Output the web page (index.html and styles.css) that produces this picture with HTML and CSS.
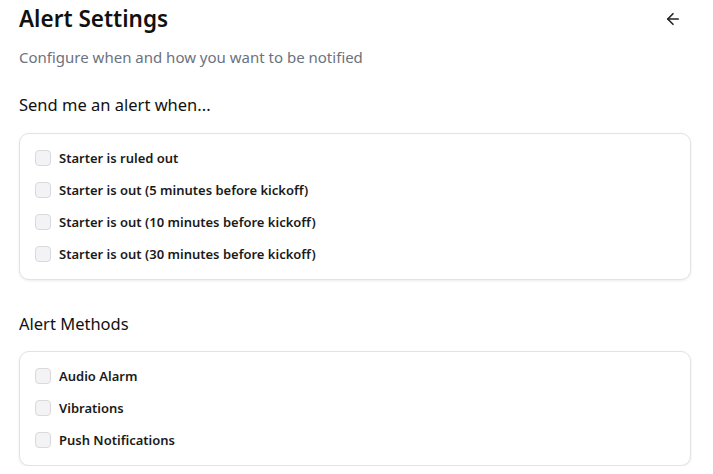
FILE: index.html
```html
<!DOCTYPE html>
<html lang="en">
<head>
<meta charset="utf-8">
<title>Alert Settings</title>
<link rel="stylesheet" href="styles.css">
</head>
<body>
<main class="page">
  <header class="header">
    <h1 class="title">Alert Settings</h1>
    <button class="back" aria-label="Back">
      <svg width="18" height="18" viewBox="0 0 24 24" fill="none" stroke="currentColor" stroke-width="2.2" stroke-linecap="round" stroke-linejoin="round"><path d="M19 12H5"/><path d="M12 19l-7-7 7-7"/></svg>
    </button>
  </header>
  <p class="subtitle">Configure when and how you want to be notified</p>

  <h2 class="section-title">Send me an alert when...</h2>
  <div class="card">
    <label class="row"><span class="box"></span><span class="label">Starter is ruled out</span></label>
    <label class="row"><span class="box"></span><span class="label">Starter is out (5 minutes before kickoff)</span></label>
    <label class="row"><span class="box"></span><span class="label">Starter is out (10 minutes before kickoff)</span></label>
    <label class="row"><span class="box"></span><span class="label">Starter is out (30 minutes before kickoff)</span></label>
  </div>

  <h2 class="section-title methods">Alert Methods</h2>
  <div class="card">
    <label class="row"><span class="box"></span><span class="label">Audio Alarm</span></label>
    <label class="row"><span class="box"></span><span class="label">Vibrations</span></label>
    <label class="row"><span class="box"></span><span class="label">Push Notifications</span></label>
  </div>
</main>
</body>
</html>
```

FILE: styles.css
```css
* { box-sizing: border-box; }
html, body { margin: 0; background: #ffffff; }
body {
  font-family: "Noto Sans", "Open Sans", "Liberation Sans", sans-serif;
  color: #111111;
}
.page {
  padding: 0 22px 0 19px;
}
.header {
  display: flex;
  align-items: center;
  justify-content: space-between;
  margin-top: 3px;
  height: 32px;
}
.title {
  margin: 0;
  font-size: 22.5px;
  line-height: 32px;
  font-weight: 600;
  color: #111111;
}
.back {
  border: 0;
  background: transparent;
  padding: 0;
  margin-right: 9px;
  width: 18px;
  height: 18px;
  color: #222222;
  display: flex;
  align-items: center;
  justify-content: center;
}
.subtitle {
  margin: 11px 0 0;
  font-size: 15px;
  line-height: 22px;
  color: #6b7280;
}
.section-title {
  margin: 25px 0 0;
  font-size: 16.5px;
  line-height: 24px;
  font-weight: 400;
  color: #111111;
}
.section-title.methods { margin-top: 32px; }
.card {
  margin-top: 16px;
  border: 1px solid #e3e3e3;
  border-radius: 10px;
  box-shadow: 0 1px 3px rgba(0, 0, 0, 0.08);
  padding: 14px 15px 15px;
  display: flex;
  flex-direction: column;
  gap: 12px;
  background: #fff;
}
.methods + .card { margin-top: 15px; }
.row {
  display: flex;
  align-items: center;
  gap: 8px;
  height: 20px;
}
.box {
  width: 16px;
  height: 16px;
  border: 1px solid #d9d9dc;
  border-radius: 4px;
  background: #f3f3f5;
  flex: none;
}
.label {
  font-size: 13px;
  line-height: 20px;
  font-weight: 600;
  color: #1a1a1a;
}
```
